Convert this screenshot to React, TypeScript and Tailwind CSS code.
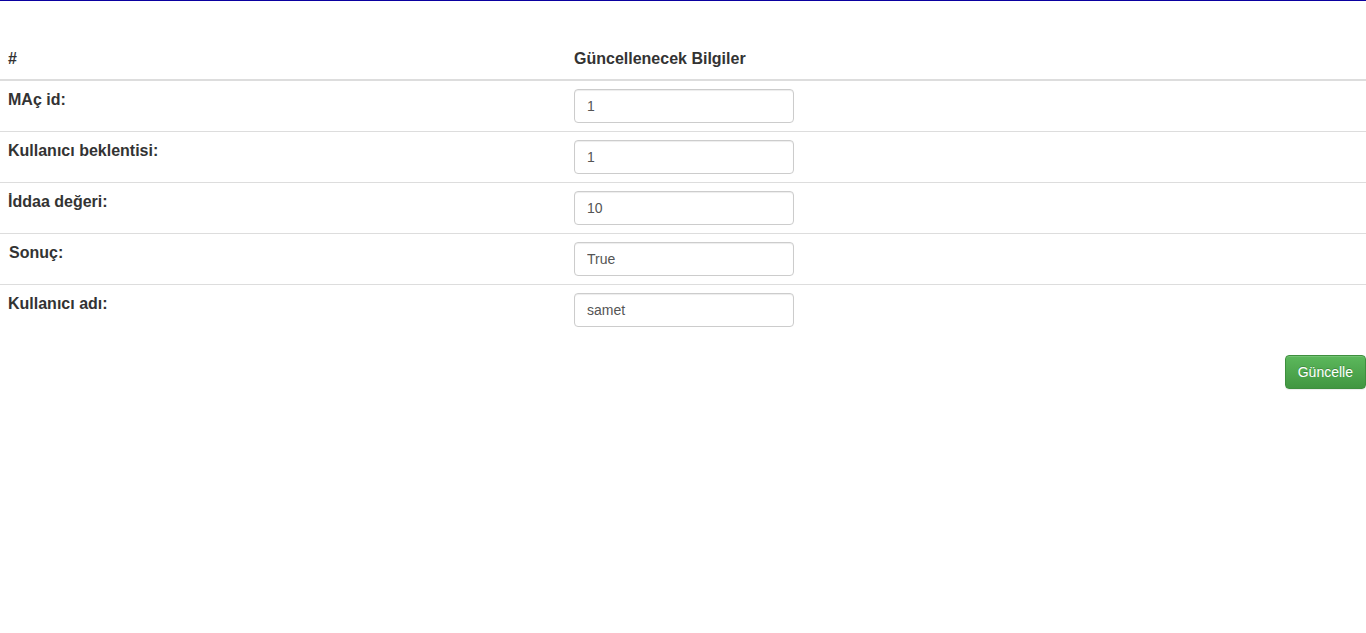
import React from "react";

const rows = [
  { label: "MAç id:", value: "1" },
  { label: "Kullanıcı beklentisi:", value: "1" },
  { label: "İddaa değeri:", value: "10" },
  { label: "Sonuç:", value: "True" },
  { label: "Kullanıcı adı:", value: "samet" },
];

export default function App() {
  return (
    <div
      className="min-h-[633px] bg-white text-[16px] leading-[1.42857] text-[#333]"
      style={{ fontFamily: '"Liberation Sans", Arial, Helvetica, sans-serif' }}
    >
      <div className="h-px bg-[#0a00a0]" />
      <div className="pt-[39px]">
        <table className="w-full border-collapse mb-[20px]">
          <thead>
            <tr>
              <th className="w-[566px] p-[8px] text-left align-bottom font-bold border-b-2 border-[#ddd]">#</th>
              <th className="p-[8px] text-left align-bottom font-bold border-b-2 border-[#ddd]">Güncellenecek Bilgiler</th>
            </tr>
          </thead>
          <tbody>
            {rows.map((r, i) => (
              <tr key={i}>
                <th
                  className={`py-[8px] pr-[8px] text-left align-top font-bold ${i === 3 ? "pl-[9px]" : "pl-[8px]"} ${i > 0 ? "border-t border-[#ddd]" : ""}`}
                >
                  {r.label}
                </th>
                <td className={`p-[8px] align-top ${i > 0 ? "border-t border-[#ddd]" : ""}`}>
                  <input
                    type="text"
                    defaultValue={r.value}
                    className="block w-[220px] h-[34px] px-[12px] py-[6px] text-[14px] leading-[20px] text-[#555] bg-white border border-[#ccc] rounded-[4px] shadow-[inset_0_1px_1px_rgba(0,0,0,0.075)] outline-none"
                    style={{ fontFamily: '"Liberation Sans", Arial, Helvetica, sans-serif' }}
                  />
                </td>
              </tr>
            ))}
          </tbody>
        </table>
        <div className="flex justify-end">
          <button
            className="h-[34px] px-[12px] text-[14px] leading-[20px] text-white rounded-[4px] border border-[#3e8f3e] bg-[linear-gradient(to_bottom,#5cb85c_0%,#419641_100%)] shadow-[inset_0_1px_0_rgba(255,255,255,0.15),0_1px_1px_rgba(0,0,0,0.075)] [text-shadow:0_-1px_0_rgba(0,0,0,0.2)]"
            style={{ fontFamily: '"Liberation Sans", Arial, Helvetica, sans-serif' }}
          >
            Güncelle
          </button>
        </div>
      </div>
    </div>
  );
}
